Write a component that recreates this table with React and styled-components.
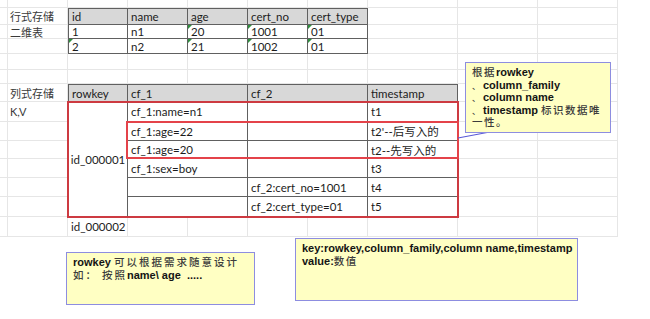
import React from 'react';
import styled, { createGlobalStyle } from 'styled-components';

const GlobalStyle = createGlobalStyle`
  html, body {
    margin: 0;
    padding: 0;
    background: #ffffff;
  }
`;

// column widths / row heights of the visible part of the sheet
const COLS = [8, 60, 60, 60, 60, 60, 60, 90, 80, 80];
const ROWS = [8, 17, 14, 15, 16, 14, 18, 20, 19, 18, 19, 19, 20, 20];

const Page = styled.div`
  position: relative;
  width: 650px;
  height: 319px;
  overflow: hidden;
  background: #ffffff;
`;

const Sheet = styled.div`
  display: grid;
  grid-template-columns: ${COLS.map(c => c + 'px').join(' ')};
  grid-template-rows: ${ROWS.map(r => r + 'px').join(' ')};
  width: max-content;
  font-family: 'Lato', 'Noto Sans CJK SC', sans-serif;
  font-size: 11.5px;
  color: #1c1c1c;
`;

const Cell = styled.div`
  grid-column: span ${p => p.$span || 1};
  grid-row: span ${p => p.$rows || 1};
  position: relative;
  box-sizing: border-box;
  display: flex;
  align-items: center;
  justify-content: ${p => (p.$center ? 'center' : 'flex-start')};
  padding: 0 3px;
  white-space: nowrap;
  background: ${p => (p.$head ? '#d8d8d8' : 'transparent')};
  border-right: 1px solid ${p => (p.$table ? '#606060' : '#e6e6e6')};
  border-bottom: 1px solid ${p => (p.$table ? '#606060' : '#e6e6e6')};
  border-top: ${p => (p.$top ? '1px solid #606060' : '0')};
  border-left: ${p => (p.$left ? '1px solid #606060' : '0')};

  &::before {
    content: '';
    display: ${p => (p.$flag ? 'block' : 'none')};
    position: absolute;
    left: 0;
    top: 0;
    border-top: 4px solid #2f8f3f;
    border-right: 4px solid transparent;
  }
`;

const Label = styled(Cell)`
  color: #3a3a3a;
  padding-left: 2px;
  font-size: 11px;
`;

// red highlight frames drawn over the cells
const Frame = styled.div`
  position: absolute;
  left: ${p => p.$x}px;
  top: ${p => p.$y}px;
  width: ${p => p.$w}px;
  height: ${p => p.$h}px;
  box-sizing: border-box;
  border: 2px solid ${p => p.$color};
  pointer-events: none;
`;

// floating comment shapes
const Note = styled.div`
  position: absolute;
  left: ${p => p.$x}px;
  top: ${p => p.$y}px;
  width: ${p => p.$w}px;
  height: ${p => p.$h}px;
  box-sizing: border-box;
  background: #ffffc3;
  border: 1.5px solid #8d8de0;
  padding: 3px 6px;
  font-family: 'Liberation Sans', 'Noto Sans CJK SC', sans-serif;
  font-weight: bold;
  font-size: 11px;
  line-height: 12.5px;
  color: #141414;
  white-space: nowrap;
`;

const Line = styled.div`
  display: flex;
  align-items: baseline;
  height: 12.5px;
`;

const Han = styled.span`
  font-family: 'Noto Sans CJK SC', sans-serif;
  font-weight: 500;
  font-size: 10.5px;
  color: #3c3c3c;
  letter-spacing: ${p => p.$gap ?? 1.5}px;
  margin-right: ${p => p.$after ?? 0}px;
`;

const Mark = styled.span`
  font-family: 'Noto Sans CJK SC', sans-serif;
  font-weight: 500;
  font-size: 8px;
  color: #3c3c3c;
  margin-right: 3px;
`;

const Pointer = styled.svg`
  position: absolute;
  left: 0;
  top: 0;
  width: 650px;
  height: 319px;
  pointer-events: none;
`;

const plain = n => Array.from({ length: n }, () => ({}));

const rows = [
  plain(10),
  [
    {}, { label: '行式存储' },
    { text: 'id', table: true, head: true, top: true, left: true },
    { text: 'name', table: true, head: true, top: true },
    { text: 'age', table: true, head: true, top: true },
    { text: 'cert_no', table: true, head: true, top: true },
    { text: 'cert_type', table: true, head: true, top: true },
    ...plain(3),
  ],
  [
    {}, { label: '二维表' },
    { text: '1', table: true, left: true },
    { text: 'n1', table: true },
    { text: '20', table: true, flag: true },
    { text: '1001', table: true, flag: true },
    { text: '01', table: true, flag: true },
    ...plain(3),
  ],
  [
    {}, {},
    { text: '2', table: true, left: true, flag: true },
    { text: 'n2', table: true },
    { text: '21', table: true, flag: true },
    { text: '1002', table: true, flag: true },
    { text: '01', table: true, flag: true },
    ...plain(3),
  ],
  plain(10),
  plain(10),
  [
    {}, { label: '列式存储' },
    { text: 'rowkey', table: true, head: true, top: true, left: true },
    { text: 'cf_1', table: true, head: true, top: true, span: 2 },
    { text: 'cf_2', table: true, head: true, top: true, span: 2 },
    { text: 'timestamp', table: true, head: true, top: true },
    ...plain(2),
  ],
  [
    {}, { label: 'K,V' },
    { text: 'id_000001', table: true, left: true, rows: 6, center: true },
    { text: 'cf_1:name=n1', table: true, span: 2 },
    { text: '', table: true, span: 2 },
    { text: 't1', table: true },
    ...plain(2),
  ],
  [
    {}, {},
    { text: 'cf_1:age=22', table: true, span: 2 },
    { text: '', table: true, span: 2 },
    { text: "t2'--后写入的", table: true },
    ...plain(2),
  ],
  [
    {}, {},
    { text: 'cf_1:age=20', table: true, span: 2 },
    { text: '', table: true, span: 2 },
    { text: 't2--先写入的', table: true },
    ...plain(2),
  ],
  [
    {}, {},
    { text: 'cf_1:sex=boy', table: true, span: 2 },
    { text: '', table: true, span: 2 },
    { text: 't3', table: true },
    ...plain(2),
  ],
  [
    {}, {},
    { text: '', table: true, span: 2 },
    { text: 'cf_2:cert_no=1001', table: true, span: 2 },
    { text: 't4', table: true },
    ...plain(2),
  ],
  [
    {}, {},
    { text: '', table: true, span: 2 },
    { text: 'cf_2:cert_type=01', table: true, span: 2 },
    { text: 't5', table: true },
    ...plain(2),
  ],
  [{}, {}, { text: 'id_000002' }, ...plain(7)],
];

const App = () => {
  return (
    <>
      <GlobalStyle />
      <Page>
        <Sheet>
          {rows.map((row, r) =>
            row.map((c, i) =>
              c.label ? (
                <Label key={`${r}-${i}`}>{c.label}</Label>
              ) : (
                <Cell
                  key={`${r}-${i}`}
                  $span={c.span}
                  $rows={c.rows}
                  $table={c.table}
                  $head={c.head}
                  $top={c.top}
                  $left={c.left}
                  $flag={c.flag}
                  $center={c.center}
                >
                  {c.text}
                </Cell>
              )
            )
          )}
        </Sheet>

        <Frame $x={67} $y={101} $w={392} $h={117} $color="#cd3a41" />
        <Frame $x={126} $y={121} $w={333} $h={38} $color="#e4434a" />

        <Pointer viewBox="0 0 650 319">
          <line x1="495" y1="131" x2="458" y2="138" stroke="#5a5ad6" strokeWidth="1.2" />
        </Pointer>

        <Note $x={465} $y={62} $w={146} $h={71}>
          <Line><Han>根据</Han>rowkey</Line>
          <Line><Mark>、</Mark>column_family</Line>
          <Line><Mark>、</Mark>column name</Line>
          <Line><Mark>、</Mark>timestamp&nbsp;<Han>标识数据唯</Han></Line>
          <Line><Han>一性。</Han></Line>
        </Note>

        <Note $x={66} $y={252} $w={189} $h={53}>
          <Line>rowkey&nbsp;<Han $gap={2}>可以根据需求随意设计</Han></Line>
          <Line><Han $gap={2} $after={4}>如：</Han><Han $gap={2}>按照</Han>name\ age&nbsp; .....</Line>
        </Note>

        <Note $x={295} $y={238} $w={283} $h={63}>
          <Line>key:rowkey,column_family,column name,timestamp</Line>
          <Line>value:<Han>数值</Han></Line>
        </Note>
      </Page>
    </>
  );
};

export default App;
